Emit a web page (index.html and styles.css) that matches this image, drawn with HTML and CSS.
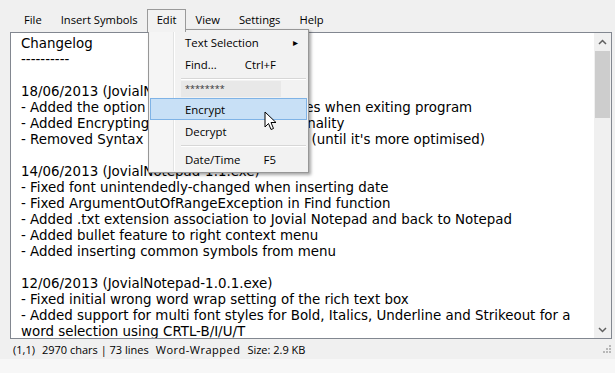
FILE: index.html
```html
<!DOCTYPE html>
<html lang="en">
<head>
    <meta charset="UTF-8">
    <title>Jovial Notepad</title>
    <link rel="stylesheet" href="styles.css">
</head>
<body>
    <div class="window">
        <div class="menubar">
            <div class="menu-item">File</div>
            <div class="menu-item">Insert Symbols</div>
            <div class="menu-item open">Edit</div>
            <div class="menu-item">View</div>
            <div class="menu-item">Settings</div>
            <div class="menu-item">Help</div>
        </div>

        <div class="editor">
            <div class="text">
                <div class="line">Changelog</div>
                <div class="line">----------</div>
                <div class="line"></div>
                <div class="line">18/06/2013 (JovialNotepad-1.2.exe)</div>
                <div class="line">- Added the option to save unsaved changes when exiting program</div>
                <div class="line">- Added Encrypting and Decrypting functionality</div>
                <div class="line">- Removed Syntax Highlighting completely (until it's more optimised)</div>
                <div class="line"></div>
                <div class="line">14/06/2013 (JovialNotepad-1.1.exe)</div>
                <div class="line">- Fixed font unintendedly-changed when inserting date</div>
                <div class="line">- Fixed ArgumentOutOfRangeException in Find function</div>
                <div class="line">- Added .txt extension association to Jovial Notepad and back to Notepad</div>
                <div class="line">- Added bullet feature to right context menu</div>
                <div class="line">- Added inserting common symbols from menu</div>
                <div class="line"></div>
                <div class="line">12/06/2013 (JovialNotepad-1.0.1.exe)</div>
                <div class="line">- Fixed initial wrong word wrap setting of the rich text box</div>
                <div class="line">- Added support for multi font styles for Bold, Italics, Underline and Strikeout for a</div>
                <div class="line">word selection using CRTL-B/I/U/T</div>
            </div>
            <div class="scrollbar">
                <div class="sb-btn">
                    <svg width="9" height="6" viewBox="0 0 9 6"><polyline points="1,5 4.5,1.5 8,5" fill="none" stroke="#606060" stroke-width="1.5"/></svg>
                </div>
                <div class="sb-track">
                    <div class="sb-thumb"></div>
                </div>
                <div class="sb-btn">
                    <svg width="9" height="6" viewBox="0 0 9 6"><polyline points="1,1 4.5,4.5 8,1" fill="none" stroke="#606060" stroke-width="1.5"/></svg>
                </div>
            </div>
        </div>

        <div class="statusbar">
            <span>(1,1)</span>
            <span>2970 chars | 73 lines</span>
            <span class="wide">Word-Wrapped</span>
            <span>Size: 2.9 KB</span>
            <svg class="grip" width="9" height="9" viewBox="0 0 9 9">
                <rect x="7" y="1" width="2" height="2" fill="#b8b8b8"/>
                <rect x="4" y="4" width="2" height="2" fill="#b8b8b8"/>
                <rect x="7" y="4" width="2" height="2" fill="#b8b8b8"/>
                <rect x="1" y="7" width="2" height="2" fill="#b8b8b8"/>
                <rect x="4" y="7" width="2" height="2" fill="#b8b8b8"/>
                <rect x="7" y="7" width="2" height="2" fill="#b8b8b8"/>
            </svg>
        </div>
        <div class="bottom"></div>

        <!-- open Edit dropdown -->
        <div class="dropdown">
            <div class="gutter"></div>
            <div class="dd-item">
                <span>Text Selection</span>
                <span class="submenu">&#9656;</span>
            </div>
            <div class="dd-item">
                <span>Find...</span>
                <span class="shortcut">Ctrl+F</span>
            </div>
            <div class="dd-sep"></div>
            <div class="dd-box">********</div>
            <div class="dd-item hover">
                <span>Encrypt</span>
            </div>
            <div class="dd-item">
                <span>Decrypt</span>
            </div>
            <div class="dd-sep"></div>
            <div class="dd-item">
                <span>Date/Time</span>
                <span class="shortcut">F5</span>
            </div>
        </div>

        <svg class="cursor" width="13" height="20" viewBox="0 0 13 20">
            <path d="M1 1 L1 16 L4.5 12.5 L7 18.5 L9.5 17.5 L7 11.5 L12 11.5 Z" fill="#fff" stroke="#000" stroke-width="1" stroke-linejoin="miter"/>
        </svg>
    </div>
</body>
</html>
```

FILE: styles.css
```css
* {
    margin: 0;
    padding: 0;
    box-sizing: border-box;
}

body {
    width: 615px;
    height: 373px;
    overflow: hidden;
    background: #f0f0f0;
    font-family: 'Open Sans', 'Noto Sans', sans-serif;
    color: #000;
}

.window {
    position: relative;
    width: 615px;
    height: 373px;
    display: flex;
    flex-direction: column;
}

.menubar {
    height: 32px;
    display: flex;
    padding: 9px 0 0 14px;
    font-size: 11.2px;
}

.menu-item {
    height: 23px;
    line-height: 20px;
    padding: 0 8px 0 9px;
    border: 1px solid transparent;
    border-bottom: none;
}

.menu-item.open {
    position: relative;
    z-index: 3;
    border-color: #9a9a9a;
    background: #f2f2f2;
}

.editor {
    height: 307px;
    width: 602px;
    margin-left: 10px;
    border: 1px solid #828790;
    background: #fff;
    display: flex;
}

.text {
    flex: 1;
    padding: 3px 0 0 10px;
    font-family: 'DejaVu Sans', sans-serif;
    font-size: 13.4px;
    line-height: 16px;
    white-space: nowrap;
    overflow: hidden;
}

.line {
    height: 16px;
}

.scrollbar {
    width: 17px;
    background: #f0f0f0;
    display: flex;
    flex-direction: column;
}

.sb-btn {
    height: 17px;
    display: flex;
    align-items: center;
    justify-content: center;
}

.sb-track {
    flex: 1;
    padding: 1px 1px 0 1px;
}

.sb-thumb {
    height: 67px;
    background: #cdcdcd;
}

.statusbar {
    height: 20px;
    display: flex;
    align-items: center;
    gap: 7px;
    padding: 1px 0 0 13px;
    font-size: 11px;
    position: relative;
}

.statusbar .wide {
    letter-spacing: 0.5px;
}

.grip {
    position: absolute;
    right: 4px;
    top: 5px;
}

.bottom {
    flex: 1;
    background: #f7f7f7;
}

.dropdown {
    position: absolute;
    left: 148px;
    top: 29px;
    width: 161px;
    height: 144px;
    background: #f2f2f2;
    border: 1px solid #979797;
    box-shadow: 2px 2px 3px rgba(0, 0, 0, 0.35);
    padding: 1px 1px 0 1px;
    font-size: 11.4px;
    z-index: 2;
}

.gutter {
    position: absolute;
    left: 1px;
    top: 1px;
    bottom: 1px;
    width: 24px;
    background: #f5f5f5;
    border-right: 1px solid #e2e3e3;
    box-shadow: 1px 0 0 #fff;
}

.dd-item {
    position: relative;
    height: 22px;
    display: flex;
    align-items: center;
    padding-left: 34px;
    border: 1px solid transparent;
}

.dd-item.hover {
    background: #c8e0f6;
    border-color: #7fb3e6;
}

.shortcut {
    position: absolute;
    right: 30px;
}

.submenu {
    position: absolute;
    right: 8px;
    font-size: 10px;
}

.dd-sep {
    position: relative;
    height: 6px;
    padding-top: 3px;
    margin-left: 31px;
    margin-right: 1px;
}

.dd-sep::after {
    content: "";
    display: block;
    height: 1px;
    background: #d7d7d7;
    box-shadow: 0 1px 0 #fff;
}

.dd-box {
    position: relative;
    margin: 0 26px 1px 31px;
    height: 16px;
    line-height: 15px;
    padding-left: 4px;
    background: #e8e8e8;
    font-size: 9px;
    color: #333;
}

.cursor {
    position: absolute;
    left: 264px;
    top: 111px;
    z-index: 4;
}
```
